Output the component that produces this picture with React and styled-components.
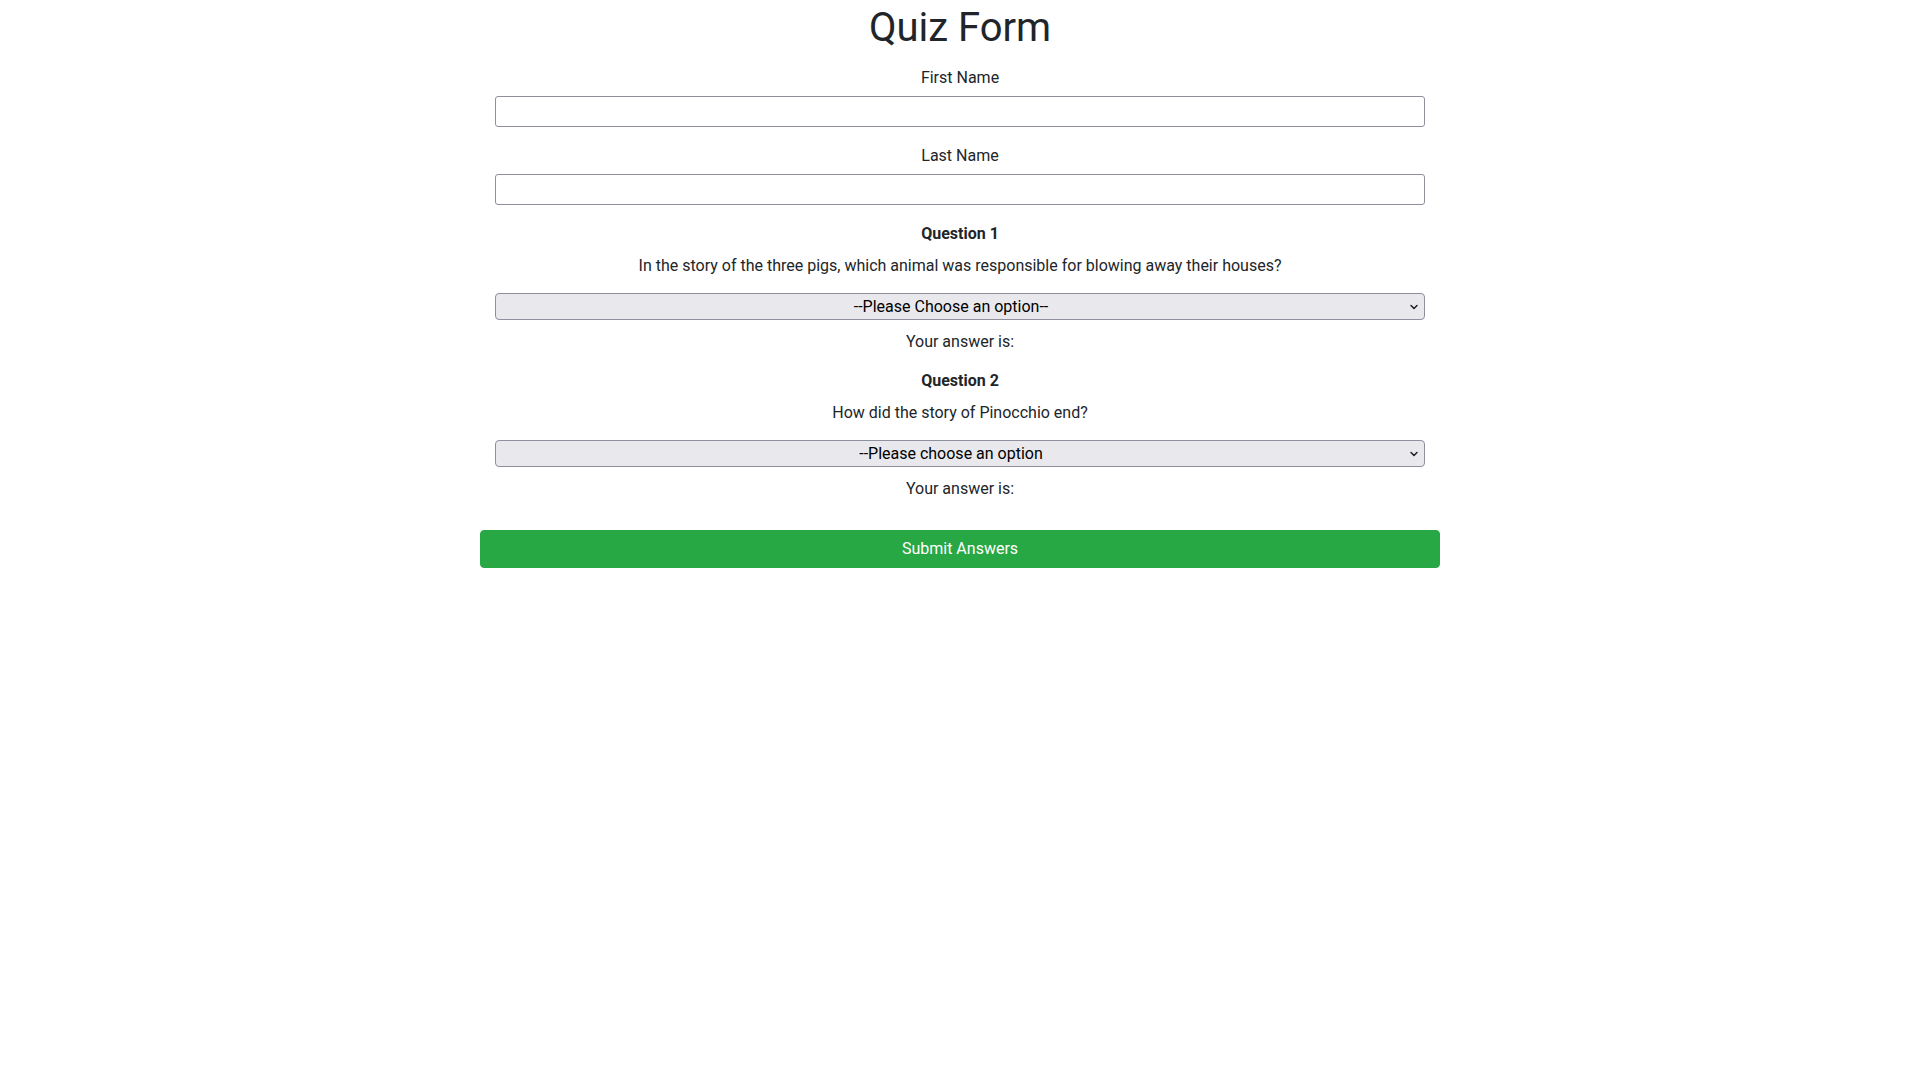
import React from 'react';
import styled, { createGlobalStyle } from 'styled-components';

const GlobalStyle = createGlobalStyle`
  body {
    margin: 0;
    background: #fff;
    color: #212529;
    font-family: "Segoe UI", Roboto, "Liberation Sans", sans-serif;
    font-size: 16px;
    line-height: 1.5;
  }
`;

const Container = styled.div`
  width: 960px;
  margin: 0 auto;
  text-align: center;
`;

const Title = styled.h1`
  font-size: 40px;
  font-weight: 400;
  line-height: 1.2;
  margin: 4px 0 14px;
`;

const Form = styled.form`
  display: flex;
  flex-direction: column;
`;

const Fields = styled.div`
  display: flex;
  flex-direction: column;
  padding: 0 15px;
`;

const Label = styled.label`
  display: block;
  margin-bottom: 6px;
`;

const TextInput = styled.input`
  box-sizing: border-box;
  height: 31px;
  width: 100%;
  border: 1px solid #8f8f9d;
  border-radius: 3px;
  margin-bottom: 17px;
  padding: 2px 6px;
  font: inherit;
`;

const QuestionTitle = styled.p`
  font-weight: 700;
  margin: 0 0 8px;
`;

const QuestionText = styled.p`
  margin: 0 0 15px;
`;

const SelectWrap = styled.div`
  position: relative;
  margin-bottom: 10px;
`;

const Select = styled.select`
  appearance: none;
  box-sizing: border-box;
  width: 100%;
  height: 27px;
  background: #e9e9ed;
  border: 1px solid #8f8f9d;
  border-radius: 4px;
  color: #000;
  font-family: inherit;
  font-size: 16px;
  text-align: center;
  text-align-last: center;
  padding: 0 22px 0 4px;
`;

const Chevron = styled.svg`
  position: absolute;
  right: 6px;
  top: 50%;
  transform: translateY(-50%);
  pointer-events: none;
`;

const Answer = styled.p`
  margin: 0 0 ${p => p.$gap}px;
`;

const SubmitButton = styled.button`
  width: 100%;
  height: 38px;
  background: #28a745;
  border: 1px solid #28a745;
  border-radius: 4px;
  color: #fff;
  font-family: inherit;
  font-size: 16px;
  line-height: 1.5;
  cursor: pointer;
`;

const ChevronIcon = () => (
  <Chevron width="10" height="10" viewBox="0 0 10 10">
    <path d="M2 3.5 L5 6.5 L8 3.5" fill="none" stroke="#222" strokeWidth="1.5" strokeLinecap="round" strokeLinejoin="round" />
  </Chevron>
);

const Question = ({ title, text, placeholder, options, gap }) => (
  <>
    <QuestionTitle>{title}</QuestionTitle>
    <QuestionText>{text}</QuestionText>
    <SelectWrap>
      <Select defaultValue="">
        <option value="">{placeholder}</option>
        {options.map(o => (
          <option key={o} value={o}>{o}</option>
        ))}
      </Select>
      <ChevronIcon />
    </SelectWrap>
    <Answer $gap={gap}>Your answer is:</Answer>
  </>
);

const App = () => {
  return (
    <>
      <GlobalStyle />
      <Container>
        <Title>Quiz Form</Title>
        <Form onSubmit={e => e.preventDefault()}>
          <Fields>
            <Label htmlFor="first">First Name</Label>
            <TextInput id="first" type="text" />
            <Label htmlFor="last">Last Name</Label>
            <TextInput id="last" type="text" />
            <Question
              title="Question 1"
              text="In the story of the three pigs, which animal was responsible for blowing away their houses?"
              placeholder="--Please Choose an option--"
              options={['The Wolf', 'The Fox', 'The Bear']}
              gap={15}
            />
            <Question
              title="Question 2"
              text="How did the story of Pinocchio end?"
              placeholder="--Please choose an option"
              options={['He became a real boy', 'He stayed a puppet', 'He was swallowed by a whale']}
              gap={29}
            />
          </Fields>
          <SubmitButton type="submit">Submit Answers</SubmitButton>
        </Form>
      </Container>
    </>
  );
};

export default App;
